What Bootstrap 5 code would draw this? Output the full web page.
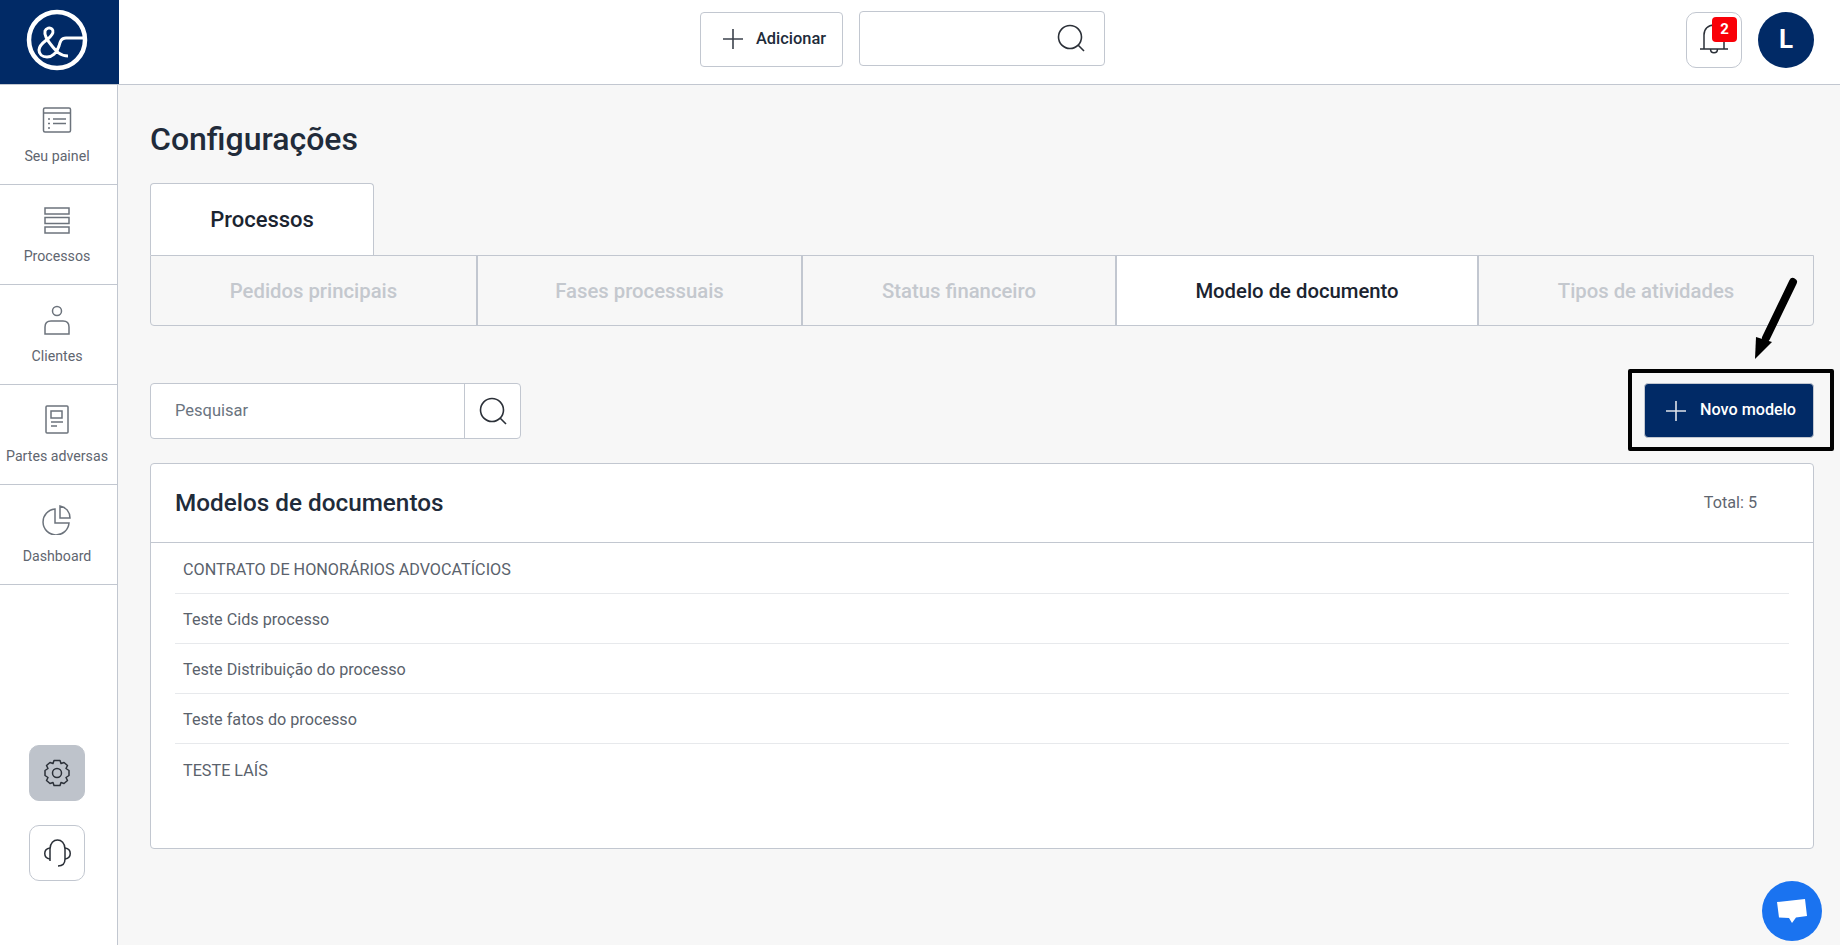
<!DOCTYPE html>
<html lang="pt-BR">
<head>
<meta charset="utf-8">
<title>Configurações</title>
<link href="https://cdn.jsdelivr.net/npm/bootstrap@5.3.0/dist/css/bootstrap.min.css" rel="stylesheet">
<style>
html,body{height:945px;overflow:hidden}
body{font-family:"Roboto","Liberation Sans",sans-serif;background:#f7f7f7;color:#212529;font-size:14px;position:relative}
.top-bar{height:85px;background:#fff;border-bottom:1px solid #c2c7d0}
.logo-box{width:119px;height:84px;background:#012a66;flex:none}
.top-center{margin-left:581px;gap:16px;margin-top:-7px}
.top-right{margin-left:auto;margin-right:26px;gap:16px;margin-top:-5px}
.add-btn{width:143px;height:55px;background:#fff;border:1px solid #c2c7d0;border-radius:4px;font-weight:500;font-size:16.400px;color:#212b3a;margin-top:1px;padding-left:5px;gap:12px}
.top-search{width:246px;height:55px;background:#fff;border:1px solid #c2c7d0;border-radius:4px;padding-right:19px;margin-top:-1px}
.bell-btn{width:56px;height:56px;background:#fff;border:1px solid #c2c7d0;border-radius:10px;position:relative}
.bell-count{position:absolute;left:25px;top:4px;width:25px;height:25px;background:#f90008;color:#fff;border-radius:4px;font-weight:700;font-size:15px;line-height:25px;text-align:center}
.avatar-dot{width:56px;height:56px;border-radius:50%;background:#012a66;color:#fff;font-weight:700;font-size:26px}
.page-wrap{height:860px}
.side-col{width:118px;flex:none;background:#fff;border-right:1px solid #c2c7d0}
.side-item{height:100px;border-bottom:1px solid #c2c7d0;color:#5f6670;font-size:14.200px;padding:20px 3px 0 0;gap:11px}
.side-item svg{height:30px}
.side-actions{margin-top:auto;gap:24px;padding:0 3px 64px 0}
.round-tool{width:56px;height:56px;border-radius:10px;background:#fff;border:1px solid #c2c7d0}
.round-tool.is-on{background:#bec3cb;border-color:#bec3cb}
.main-col{padding:0 26px 0 32px;min-width:0}
.page-title{font-size:32px;font-weight:500;line-height:38px;margin:35px 0 25px;color:#212b3a}
.group-tab{width:224px;height:72px;background:#fff;border:1px solid #c2c7d0;border-bottom:0;border-radius:4px 4px 0 0;font-size:22px;font-weight:500;color:#1b2430}
.sub-tabs{height:71px;border:1px solid #c2c7d0;border-radius:0 0 4px 4px;margin-bottom:57px;background:#f7f7f7}
.sub-tab{font-size:20.300px;font-weight:500;color:#c4c8ce;border-right:2px solid #c2c7d0;flex:none;padding-top:2px}
.sub-tab:last-child{border-right:0}
.sub-tab.is-on{background:#fff;color:#1b2430}
.sub-w1{width:327px}.sub-w2{width:325px}.sub-w3{width:314px}.sub-w4{width:362px}
.find-box{width:371px;height:56px;background:#fff;border:1px solid #c2c7d0;border-radius:4px;color:#6a7480;font-size:16.500px}
.find-box .find-text{padding-left:24px}
.find-box .find-btn{width:56px;border-left:1px solid #c2c7d0}
.new-btn{width:170px;height:55px;background:#012a66;color:#fff;border:1px solid #c2c7d0;border-radius:4px;font-weight:500;font-size:16.200px;padding-left:3px;gap:13px}
.docs-card{height:386px;margin-top:24px;background:#fff;border:1px solid #c2c7d0;border-radius:4px}
.docs-head{height:79px;border-bottom:1px solid #c2c7d0;padding:0 56px 0 24px}
.docs-head h2{font-size:24.300px;font-weight:500;margin:0;color:#212b3a}
.docs-head span{color:#5f6670;font-size:16.200px}
.docs-list{margin:0 24px;padding:1px 0 0;list-style:none}
.docs-list li{height:50px;border-bottom:1px solid #e7e9ec;padding:4px 0 0 8px;color:#5a626c;font-size:16.200px;display:flex;align-items:center}
.docs-list li:last-child{border-bottom:0}
.mark-frame{position:absolute;left:1628px;top:369px;width:206px;height:82px;border:4px solid #000;border-radius:2px;pointer-events:none}
.mark-arrow{position:absolute;left:1740px;top:270px}
.chat-fab{position:absolute;left:1762px;top:881px;width:60px;height:60px;border-radius:50%;background:#1a73f0}
</style>
</head>
<body>
<header class="top-bar d-flex">
  <div class="logo-box">
    <svg width="119" height="84" viewBox="0 0 119 84" fill="none" stroke="#fff">
      <circle cx="57" cy="40" r="28" stroke-width="4.500"/>
      <path d="M84 38H66C61 38 60 42 59 46C57 53 52 57 47 57C42 57 39 54 39 50C39 44 46 41 50 37C53 34 54 31 52 29C50 27 46 28 45 31C44 35 47 40 52 46C56 51 60 56 68 56" stroke-width="3"/>
    </svg>
  </div>
  <div class="d-flex flex-fill align-items-center pe-0">
    <div class="top-center d-flex align-items-center">
      <div class="add-btn d-flex align-items-center justify-content-center">
        <svg width="22" height="22" viewBox="0 0 22 22" stroke="#3c434d" stroke-width="1.600"><path d="M11 1v20M1 11h20"/></svg>
        <span>Adicionar</span>
      </div>
      <div class="top-search d-flex align-items-center justify-content-end">
        <svg width="28" height="28" viewBox="0 0 28 28" fill="none" stroke="#2b3038" stroke-width="1.600"><circle cx="13" cy="13" r="11.500"/><path d="m21 21 6 6"/></svg>
      </div>
    </div>
    <div class="top-right d-flex align-items-center">
      <div class="bell-btn d-flex align-items-center justify-content-center">
        <svg width="30" height="34" viewBox="0 0 30 34" fill="none" stroke="#2b3038" stroke-width="1.500"><path d="M1 26h28M5 26V12c0-6 4-10 10-10s10 4 10 10v14M11.500 26c0 5 7 5 7 0"/></svg>
        <span class="bell-count">2</span>
      </div>
      <div class="avatar-dot d-flex align-items-center justify-content-center">L</div>
    </div>
  </div>
</header>
<div class="page-wrap d-flex">
  <nav class="side-col d-flex flex-column">
    <div class="side-item d-flex flex-column align-items-center">
      <svg width="30" height="30" viewBox="0 0 30 30" fill="none" stroke="#6c737c" stroke-width="1.500"><rect x="1.500" y="3" width="27" height="24" rx="1.500"/><path d="M1.500 8h27M6 14h2M11 14h13M6 18.500h2M11 18.500h13M6 23h2" /></svg>
      <span>Seu painel</span>
    </div>
    <div class="side-item d-flex flex-column align-items-center">
      <svg width="30" height="30" viewBox="0 0 30 30" fill="none" stroke="#6c737c" stroke-width="1.500"><rect x="3" y="3" width="24" height="6"/><rect x="3" y="12.500" width="24" height="6"/><rect x="3" y="22" width="24" height="6"/></svg>
      <span>Processos</span>
    </div>
    <div class="side-item d-flex flex-column align-items-center">
      <svg width="30" height="30" viewBox="0 0 30 30" fill="none" stroke="#6c737c" stroke-width="1.500"><circle cx="15" cy="6" r="4.500"/><path d="M3 29v-7c0-4 2-6 6-6h12c4 0 6 2 6 6v7z"/></svg>
      <span>Clientes</span>
    </div>
    <div class="side-item d-flex flex-column align-items-center">
      <svg width="30" height="30" viewBox="0 0 30 30" fill="none" stroke="#6c737c" stroke-width="1.500"><rect x="4" y="1" width="22" height="27" rx="1"/><rect x="9" y="6" width="11" height="7"/><path d="M9 17h12M9 21h6"/></svg>
      <span>Partes adversas</span>
    </div>
    <div class="side-item d-flex flex-column align-items-center">
      <svg width="30" height="30" viewBox="0 0 30 30" fill="none" stroke="#6c737c" stroke-width="1.500"><path d="M13 4a13 13 0 1 0 14 14H13z"/><path d="M18 1v12h10C28 7 24 2 18 1z"/></svg>
      <span>Dashboard</span>
    </div>
    <div class="side-actions d-flex flex-column align-items-center">
      <div class="round-tool is-on d-flex align-items-center justify-content-center">
        <svg width="30" height="30" viewBox="0 0 30 30" fill="none" stroke="#2b3038" stroke-width="1.500"><circle cx="15" cy="15" r="4.500"/><path d="M12 2.500h6l1 3 3-1 3.500 3-1.500 3 3 2v5l-3 2 1.500 3-3.500 3-3-1-1 3h-6l-1-3-3 1-3.500-3 1.500-3-3-2v-5l3-2-1.500-3 3.500-3 3 1z" stroke-linejoin="round"/></svg>
      </div>
      <div class="round-tool d-flex align-items-center justify-content-center">
        <svg width="30" height="30" viewBox="0 0 30 30" fill="none" stroke="#2b3038" stroke-width="1.500"><path d="M8 23V11C8-1 23-1 23 11V21C23 26 20 28 16 28"/><path d="M8 10C1 11 1 20 8 21M23 10C30 11 30 20 23 21"/></svg>
      </div>
    </div>
  </nav>
  <main class="main-col flex-fill">
    <h1 class="page-title">Configurações</h1>
    <div class="group-tab d-flex align-items-center justify-content-center">Processos</div>
    <div class="sub-tabs d-flex">
      <div class="sub-tab d-flex align-items-center justify-content-center sub-w1">Pedidos principais</div>
      <div class="sub-tab d-flex align-items-center justify-content-center sub-w2">Fases processuais</div>
      <div class="sub-tab d-flex align-items-center justify-content-center sub-w3">Status financeiro</div>
      <div class="sub-tab is-on d-flex align-items-center justify-content-center sub-w4">Modelo de documento</div>
      <div class="sub-tab d-flex align-items-center justify-content-center flex-fill">Tipos de atividades</div>
    </div>
    <div class="d-flex justify-content-between align-items-start">
      <div class="find-box d-flex">
        <div class="find-text flex-fill d-flex align-items-center">Pesquisar</div>
        <div class="find-btn d-flex align-items-center justify-content-center">
          <svg width="28" height="28" viewBox="0 0 28 28" fill="none" stroke="#2b3038" stroke-width="1.600"><circle cx="13" cy="13" r="11.500"/><path d="m21 21 6 6"/></svg>
        </div>
      </div>
      <div class="new-btn d-flex align-items-center justify-content-center">
        <svg width="22" height="22" viewBox="0 0 22 22" stroke="#dfe3ea" stroke-width="1.600"><path d="M11 1v20M1 11h20"/></svg>
        <span>Novo modelo</span>
      </div>
    </div>
    <section class="docs-card">
      <div class="docs-head d-flex align-items-center justify-content-between">
        <h2>Modelos de documentos</h2>
        <span>Total: 5</span>
      </div>
      <ul class="docs-list">
        <li>CONTRATO DE HONORÁRIOS ADVOCATÍCIOS</li>
        <li>Teste Cids processo</li>
        <li>Teste Distribuição do processo</li>
        <li>Teste fatos do processo</li>
        <li>TESTE LAÍS</li>
      </ul>
    </section>
  </main>
</div>
<div class="mark-frame"></div>
<svg class="mark-arrow" width="70" height="95" viewBox="0 0 70 95"><path d="M53 12 26 68" stroke="#000" stroke-width="8" stroke-linecap="round"/><path d="M15 89 16 67 32 72z" fill="#000"/></svg>
<div class="chat-fab d-flex align-items-center justify-content-center">
  <svg width="30" height="26" viewBox="0 0 30 26" fill="#fff"><path d="M0 4 28 1l2 17-11 1.500L15 25l-3-5-10-.5z"/></svg>
</div>
<script src="https://cdn.jsdelivr.net/npm/bootstrap@5.3.0/dist/js/bootstrap.bundle.min.js"></script>
</body>
</html>
